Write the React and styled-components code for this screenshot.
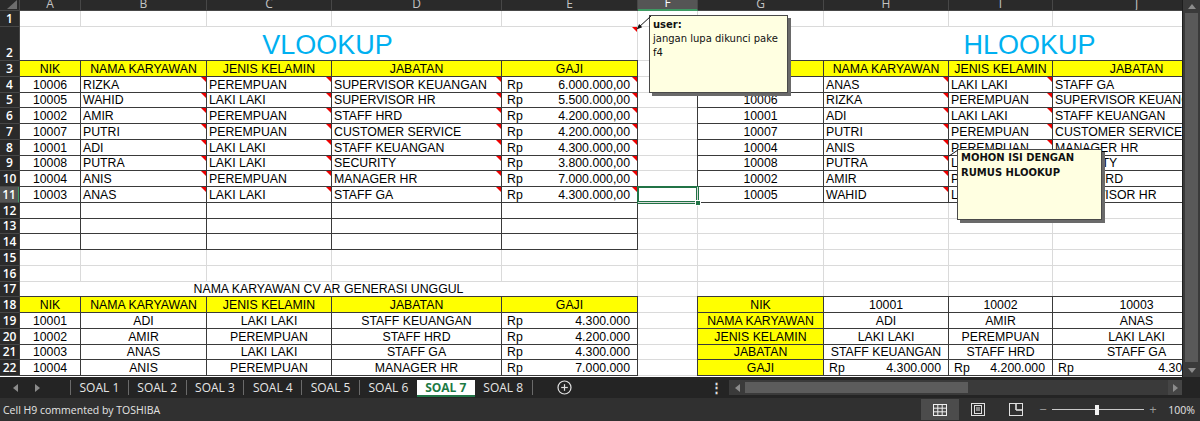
import React from "react";
import styled, { createGlobalStyle, css } from "styled-components";

const GRIDLINE = "#dadada";
const LINE = "#3a3a3a";
const GREEN = "#217346";
const YELLOW = "#ffff00";
const COLS = [61, 126, 125, 170, 136, 60, 126, 125, 104, 168];
const TEMPLATE = `20px ${COLS.map((w) => `${w}px`).join(" ")}`;
const LETTERS = "ABCDEFGHIJ".split("");
const RH = 15.75;
const JUSTIFY = { left: "flex-start", center: "center", right: "flex-end", between: "space-between" };

const Global = createGlobalStyle`
  *, *::before, *::after { box-sizing: border-box; }
  html, body { margin: 0; padding: 0; background: #262626; }
  body { width: 1200px; height: 421px; overflow: hidden; font-family: "Liberation Sans", Arial, sans-serif; }
`;

const Window = styled.div`
  width: 1200px;
  height: 421px;
  display: flex;
  flex-direction: column;
  background: #262626;
  overflow: hidden;
`;

const Workspace = styled.div`
  display: flex;
  height: 377px;
  flex-shrink: 0;
`;

const Viewport = styled.div`
  position: relative;
  width: 1182px;
  height: 100%;
  overflow: hidden;
  background: #fff;
`;

const SheetGrid = styled.div`
  width: 1221px;
`;

const Row = styled.div`
  display: grid;
  grid-template-columns: ${TEMPLATE};
  height: ${(p) => p.$h}px;
`;

const Corner = styled.div`
  background: #2a2a2a;
  border-right: 1px solid #474747;
  border-bottom: 1px solid #474747;
  display: flex;
  align-items: flex-end;
  justify-content: flex-end;
  padding: 0 2px 1px 0;
`;

const ColHead = styled.div`
  display: flex;
  justify-content: center;
  align-items: flex-end;
  overflow: hidden;
  background: ${(p) => (p.$active ? "#555555" : "#2a2a2a")};
  color: ${(p) => (p.$active ? "#ffffff" : "#c4c4c4")};
  font: 12px/12px "Open Sans", sans-serif;
  border-right: 1px solid #474747;
  border-bottom: ${(p) => (p.$active ? `2px solid #3e9a63` : "1px solid #474747")};
`;

const RowHead = styled.div`
  display: flex;
  justify-content: center;
  align-items: flex-end;
  overflow: hidden;
  background: ${(p) => (p.$active ? "#555555" : "#2a2a2a")};
  color: #ffffff;
  font: 600 12px/15px "Open Sans", sans-serif;
  border-bottom: 1px solid #474747;
  border-right: ${(p) => (p.$active ? `2px solid #3e9a63` : "1px solid #474747")};
`;

const Cell = styled.div`
  position: relative;
  min-width: 0;
  grid-column: span ${(p) => p.$span || 1};
  display: flex;
  align-items: flex-end;
  justify-content: ${(p) => JUSTIFY[p.$align || "left"]};
  padding: 0 2px;
  background: ${(p) => p.$fill || "#fff"};
  border-right: 1px solid ${(p) => (p.$box ? LINE : GRIDLINE)};
  border-bottom: 1px solid ${(p) => (p.$box ? LINE : GRIDLINE)};
  font: 12.3px/14px "Liberation Sans", Arial, sans-serif;
  color: #000;
  white-space: nowrap;
  overflow: hidden;
  ${(p) =>
    p.$box &&
    css`
      box-shadow: -1px -1px 0 ${LINE}, 0 -1px 0 ${LINE}, -1px 0 0 ${LINE};
    `}
  ${(p) =>
    p.$note &&
    css`
      &::after {
        content: "";
        position: absolute;
        top: 0;
        right: 0;
        width: 0;
        height: 0;
        border-top: 5px solid #ee0000;
        border-left: 5px solid transparent;
      }
    `}
  ${(p) =>
    p.$sel &&
    css`
      overflow: visible;
      z-index: 2;
      box-shadow: 0 0 0 1px ${GREEN}, inset 0 0 0 1px ${GREEN};
      &::after {
        content: "";
        position: absolute;
        right: -4px;
        bottom: -4px;
        width: 6px;
        height: 6px;
        background: ${GREEN};
        border: 1px solid #fff;
      }
    `}
`;

const Head = styled(Cell).attrs({ $box: true, $fill: YELLOW, $align: "center" })``;

const Money = styled(Cell)`
  justify-content: space-between;
  padding: 0 7px 0 5px;
`;

const Title = styled(Cell)`
  font-size: 27px;
  line-height: 30px;
  color: #00b0f0;
  padding-left: ${(p) => p.$indent || 0}px;
`;

const Note = styled.div`
  position: absolute;
  z-index: 5;
  left: ${(p) => p.$x}px;
  top: ${(p) => p.$y}px;
  width: ${(p) => p.$w}px;
  height: ${(p) => p.$h}px;
  background: #ffffe1;
  border: 1px solid #4a4a4a;
  box-shadow: 3px 3px 0 #6a6a6a;
  padding: ${(p) => p.$pad};
  font-family: "DejaVu Sans", Tahoma, sans-serif;
  font-size: 10px;
  color: #111;
`;

const NoteLine = styled.div`
  font-weight: ${(p) => (p.$bold ? 700 : 400)};
  line-height: ${(p) => p.$lh}px;
  white-space: nowrap;
`;

const Connector = styled.svg`
  position: absolute;
  z-index: 6;
  left: ${(p) => p.$x}px;
  top: ${(p) => p.$y}px;
  overflow: visible;
`;

const VScroll = styled.div`
  width: 18px;
  height: 100%;
  display: flex;
  flex-direction: column;
  background: #3a3a3a;
  border-left: 1px solid #1e1e1e;
`;

const ScrollBtn = styled.div`
  flex: 0 0 ${(p) => p.$size}px;
  display: flex;
  align-items: center;
  justify-content: center;
  background: ${(p) => p.$bg || "transparent"};
`;

const VThumb = styled.div`
  flex: 1;
  margin: 1px 2px;
  background: #595959;
`;

const TabBar = styled.div`
  display: flex;
  align-items: center;
  height: 21px;
  background: #242424;
  flex-shrink: 0;
`;

const TabStrip = styled.div`
  display: flex;
  align-items: stretch;
  height: 100%;
  width: 708px;
`;

const NavArrows = styled.div`
  width: 70px;
  display: flex;
  align-items: center;
  gap: 15px;
  padding-left: 12px;
`;

const Divider = styled.span`
  flex: 0 0 1px;
  height: 15px;
  align-self: center;
  background: #6a6a6a;
`;

const Tab = styled.div`
  flex: 0 0 ${(p) => (p.$active ? 58 : 56.8)}px;
  display: flex;
  align-items: center;
  justify-content: center;
  font: ${(p) => (p.$active ? 700 : 400)} 12px "Open Sans", sans-serif;
  color: ${(p) => (p.$active ? "#1d7a45" : "#e6e6e6")};
  background: ${(p) => (p.$active ? "#ffffff" : "transparent")};
  ${(p) =>
    p.$active &&
    css`
      margin: 3px 0 1px;
      border-bottom: 2px solid ${GREEN};
    `}
`;

const AddSheet = styled.div`
  display: flex;
  align-items: center;
  margin-left: 24px;
`;

const Dots = styled.div`
  width: 16px;
  margin-right: 5px;
  color: #e0e0e0;
  font: 700 13px/1 "Open Sans", sans-serif;
  text-align: center;
`;

const HScroll = styled.div`
  width: 453px;
  height: 15px;
  display: flex;
  background: #3a3a3a;
`;

const HThumb = styled.div`
  width: 223px;
  margin: 2px 0;
  background: #5c5c5c;
`;

const HTrack = styled.div`
  flex: 1;
`;

const StatusBar = styled.div`
  flex: 1;
  display: flex;
  align-items: center;
  background: #303030;
  color: #e4e4e4;
  font: 10.5px "Open Sans", sans-serif;
`;

const StatusText = styled.div`
  flex: 1;
  padding-left: 3px;
`;

const ViewBtn = styled.div`
  width: 38px;
  height: 21px;
  display: flex;
  align-items: center;
  justify-content: center;
  background: ${(p) => (p.$active ? "#4c4c4c" : "transparent")};
`;

const ZoomSign = styled.div`
  width: 14px;
  margin-left: ${(p) => p.$ml}px;
  text-align: center;
  color: #9a9a9a;
  font: 13px/1 "Open Sans", sans-serif;
`;

const ZoomTrack = styled.div`
  position: relative;
  width: 92px;
  height: 12px;
  margin-left: 2px;
  display: flex;
  align-items: center;
  &::before {
    content: "";
    flex: 1;
    height: 1px;
    background: #c8c8c8;
  }
`;

const ZoomKnob = styled.div`
  position: absolute;
  left: 43px;
  top: 1px;
  width: 4px;
  height: 10px;
  background: #f2f2f2;
`;

const ZoomValue = styled.div`
  width: 30px;
  margin: 0 5px 0 5px;
  text-align: right;
`;

const leftData = [
  ["10006", "RIZKA", "PEREMPUAN", "SUPERVISOR KEUANGAN", "6.000.000,00"],
  ["10005", "WAHID", "LAKI LAKI", "SUPERVISOR HR", "5.500.000,00"],
  ["10002", "AMIR", "PEREMPUAN", "STAFF HRD", "4.200.000,00"],
  ["10007", "PUTRI", "PEREMPUAN", "CUSTOMER SERVICE", "4.200.000,00"],
  ["10001", "ADI", "LAKI LAKI", "STAFF KEUANGAN", "4.300.000,00"],
  ["10008", "PUTRA", "LAKI LAKI", "SECURITY", "3.800.000,00"],
  ["10004", "ANIS", "PEREMPUAN", "MANAGER HR", "7.000.000,00"],
  ["10003", "ANAS", "LAKI LAKI", "STAFF GA", "4.300.000,00"],
];

const rightData = [
  ["10003", "ANAS", "LAKI LAKI", "STAFF GA"],
  ["10006", "RIZKA", "PEREMPUAN", "SUPERVISOR KEUANGAN"],
  ["10001", "ADI", "LAKI LAKI", "STAFF KEUANGAN"],
  ["10007", "PUTRI", "PEREMPUAN", "CUSTOMER SERVICE"],
  ["10004", "ANIS", "PEREMPUAN", "MANAGER HR"],
  ["10008", "PUTRA", "LAKI LAKI", "SECURITY"],
  ["10002", "AMIR", "PEREMPUAN", "STAFF HRD"],
  ["10005", "WAHID", "LAKI LAKI", "SUPERVISOR HR"],
];

const bottomData = [
  ["10001", "ADI", "LAKI LAKI", "STAFF KEUANGAN", "4.300.000"],
  ["10002", "AMIR", "PEREMPUAN", "STAFF HRD", "4.200.000"],
  ["10003", "ANAS", "LAKI LAKI", "STAFF GA", "4.300.000"],
  ["10004", "ANIS", "PEREMPUAN", "MANAGER HR", "7.000.000"],
];

const HEADERS = ["NIK", "NAMA KARYAWAN", "JENIS KELAMIN", "JABATAN", "GAJI"];

function SheetRow({ n, h = RH, active, children }) {
  return (
    <Row $h={h}>
      <RowHead $active={active}>{n}</RowHead>
      {children}
    </Row>
  );
}

const Blank = ({ count }) => Array.from({ length: count }, (_, i) => <Cell key={i} />);

function Rupiah({ value, note }) {
  return (
    <Money $box $note={note}>
      <span>Rp</span>
      <span>{value}</span>
    </Money>
  );
}

const Tri = ({ dir }) => {
  const pts = {
    left: "6,0 6,8 1,4",
    right: "1,0 1,8 6,4",
    up: "0,6 8,6 4,1",
    down: "0,1 8,1 4,6",
  }[dir];
  return (
    <svg width={dir === "left" || dir === "right" ? 7 : 8} height={dir === "left" || dir === "right" ? 8 : 7}>
      <polygon points={pts} fill="#8c8c8c" />
    </svg>
  );
};

const TABS = ["SOAL 1", "SOAL 2", "SOAL 3", "SOAL 4", "SOAL 5", "SOAL 6", "SOAL 7", "SOAL 8"];

export default function App() {
  return (
    <Window>
      <Global />
      <Workspace>
        <Viewport>
          <SheetGrid>
            <Row $h={11}>
              <Corner>
                <svg width="10" height="9">
                  <polygon points="0,9 10,9 10,0" fill="#6e6e6e" />
                </svg>
              </Corner>
              {LETTERS.map((l) => (
                <ColHead key={l} $active={l === "F"}>
                  {l}
                </ColHead>
              ))}
            </Row>

            <SheetRow n={1} h={16}>
              <Blank count={10} />
            </SheetRow>

            <SheetRow n={2} h={34}>
              <Title $span={5} $align="center" $note>
                VLOOKUP
              </Title>
              <Cell />
              <Title $span={4} $align="center" $indent={143}>
                HLOOKUP
              </Title>
            </SheetRow>

            <SheetRow n={3}>
              {HEADERS.map((t) => (
                <Head key={t}>{t}</Head>
              ))}
              <Cell />
              {HEADERS.slice(0, 4).map((t) => (
                <Head key={"r" + t}>{t}</Head>
              ))}
            </SheetRow>

            {leftData.map((d, i) => {
              const r = rightData[i];
              const n = 4 + i;
              return (
                <SheetRow key={n} n={n} active={n === 11}>
                  <Cell $box $align="center">
                    {d[0]}
                  </Cell>
                  <Cell $box $note>
                    {d[1]}
                  </Cell>
                  <Cell $box $note>
                    {d[2]}
                  </Cell>
                  <Cell $box $note>
                    {d[3]}
                  </Cell>
                  <Rupiah value={d[4]} note />
                  <Cell $sel={n === 11} />
                  <Cell $box $align="center">
                    {r[0]}
                  </Cell>
                  <Cell $box $note>
                    {r[1]}
                  </Cell>
                  <Cell $box $note>
                    {r[2]}
                  </Cell>
                  <Cell $box>{r[3]}</Cell>
                </SheetRow>
              );
            })}

            {[12, 13, 14].map((n) => (
              <SheetRow key={n} n={n}>
                <Cell $box />
                <Cell $box />
                <Cell $box />
                <Cell $box />
                <Cell $box />
                <Blank count={5} />
              </SheetRow>
            ))}

            {[15, 16].map((n) => (
              <SheetRow key={n} n={n}>
                <Blank count={10} />
              </SheetRow>
            ))}

            <SheetRow n={17}>
              <Cell $span={5} $align="center">
                NAMA KARYAWAN CV AR GENERASI UNGGUL
              </Cell>
              <Blank count={5} />
            </SheetRow>

            <SheetRow n={18}>
              {HEADERS.map((t) => (
                <Head key={t}>{t}</Head>
              ))}
              <Cell />
              <Head>NIK</Head>
              {bottomData.slice(0, 3).map((d) => (
                <Cell key={d[0]} $box $align="center">
                  {d[0]}
                </Cell>
              ))}
            </SheetRow>

            {bottomData.map((d, i) => {
              const n = 19 + i;
              const field = i + 1;
              return (
                <SheetRow key={n} n={n}>
                  <Cell $box $align="center">
                    {d[0]}
                  </Cell>
                  <Cell $box $align="center">
                    {d[1]}
                  </Cell>
                  <Cell $box $align="center">
                    {d[2]}
                  </Cell>
                  <Cell $box $align="center">
                    {d[3]}
                  </Cell>
                  <Rupiah value={d[4]} />
                  <Cell />
                  <Head>{HEADERS[field]}</Head>
                  {bottomData.slice(0, 3).map((b) =>
                    field === 4 ? (
                      <Rupiah key={b[0]} value={b[4]} />
                    ) : (
                      <Cell key={b[0]} $box $align="center">
                        {b[field]}
                      </Cell>
                    )
                  )}
                </SheetRow>
              );
            })}
          </SheetGrid>

          <Connector $x={630} $y={12} width="26" height="22">
            <line x1="8" y1="16" x2="21" y2="4" stroke="#111" strokeWidth="1" />
            <polygon points="6.5,17.5 12.2,15.2 9.2,12" fill="#111" />
          </Connector>
          <Note $x={649} $y={15} $w={139} $h={78} $pad="2px 3px">
            <NoteLine $bold $lh={14}>
              user:
            </NoteLine>
            <NoteLine $lh={14}>jangan lupa dikunci pake</NoteLine>
            <NoteLine $lh={14}>f4</NoteLine>
          </Note>

          <Connector $x={945} $y={146} width="16" height="14">
            <line x1="4" y1="10" x2="13" y2="4" stroke="#111" strokeWidth="1" />
          </Connector>
          <Note $x={957} $y={149} $w={145} $h={71} $pad="0 3px">
            <NoteLine $bold $lh={15}>
              MOHON ISI DENGAN
            </NoteLine>
            <NoteLine $bold $lh={15}>
              RUMUS HLOOKUP
            </NoteLine>
          </Note>
        </Viewport>

        <VScroll>
          <ScrollBtn $size={12}>
            <Tri dir="up" />
          </ScrollBtn>
          <VThumb />
          <ScrollBtn $size={14}>
            <Tri dir="down" />
          </ScrollBtn>
        </VScroll>
      </Workspace>

      <TabBar>
        <TabStrip>
          <NavArrows>
            <Tri dir="left" />
            <Tri dir="right" />
          </NavArrows>
          <Divider />
          {TABS.map((t, i) => (
            <React.Fragment key={t}>
              <Tab $active={t === "SOAL 7"}>{t}</Tab>
              {i < 5 || i === 7 ? <Divider /> : null}
            </React.Fragment>
          ))}
          <AddSheet>
            <svg width="15" height="15" viewBox="0 0 15 15">
              <circle cx="7.5" cy="7.5" r="6.5" fill="none" stroke="#e0e0e0" strokeWidth="1.2" />
              <line x1="7.5" y1="4.2" x2="7.5" y2="10.8" stroke="#e0e0e0" strokeWidth="1.2" />
              <line x1="4.2" y1="7.5" x2="10.8" y2="7.5" stroke="#e0e0e0" strokeWidth="1.2" />
            </svg>
          </AddSheet>
        </TabStrip>
        <Dots>⋮</Dots>
        <HScroll>
          <ScrollBtn $size={16}>
            <Tri dir="left" />
          </ScrollBtn>
          <HThumb />
          <HTrack />
          <ScrollBtn $size={14} $bg="#454545">
            <Tri dir="right" />
          </ScrollBtn>
        </HScroll>
      </TabBar>

      <StatusBar>
        <StatusText>Cell H9 commented by TOSHIBA</StatusText>
        <ViewBtn $active>
          <svg width="14" height="12" viewBox="0 0 14 12">
            <rect x="0.5" y="0.5" width="13" height="11" fill="none" stroke="#f0f0f0" />
            <line x1="4.8" y1="0" x2="4.8" y2="12" stroke="#f0f0f0" />
            <line x1="9.2" y1="0" x2="9.2" y2="12" stroke="#f0f0f0" />
            <line x1="0" y1="4.2" x2="14" y2="4.2" stroke="#f0f0f0" />
            <line x1="0" y1="7.8" x2="14" y2="7.8" stroke="#f0f0f0" />
          </svg>
        </ViewBtn>
        <ViewBtn>
          <svg width="14" height="13" viewBox="0 0 14 13">
            <rect x="0.5" y="0.5" width="13" height="12" fill="none" stroke="#e0e0e0" />
            <rect x="3.5" y="2.5" width="7" height="8" fill="none" stroke="#e0e0e0" />
            <line x1="5" y1="5" x2="9" y2="5" stroke="#e0e0e0" />
            <line x1="5" y1="7" x2="9" y2="7" stroke="#e0e0e0" />
          </svg>
        </ViewBtn>
        <ViewBtn>
          <svg width="14" height="13" viewBox="0 0 14 13">
            <rect x="0.5" y="0.5" width="13" height="12" fill="none" stroke="#e0e0e0" />
            <line x1="7" y1="0" x2="7" y2="7" stroke="#e0e0e0" strokeWidth="1.6" />
            <line x1="7" y1="7" x2="13" y2="7" stroke="#e0e0e0" strokeWidth="1.6" />
          </svg>
        </ViewBtn>
        <ZoomSign $ml={1}>−</ZoomSign>
        <ZoomTrack>
          <ZoomKnob />
        </ZoomTrack>
        <ZoomSign $ml={2}>+</ZoomSign>
        <ZoomValue>100%</ZoomValue>
      </StatusBar>
    </Window>
  );
}
